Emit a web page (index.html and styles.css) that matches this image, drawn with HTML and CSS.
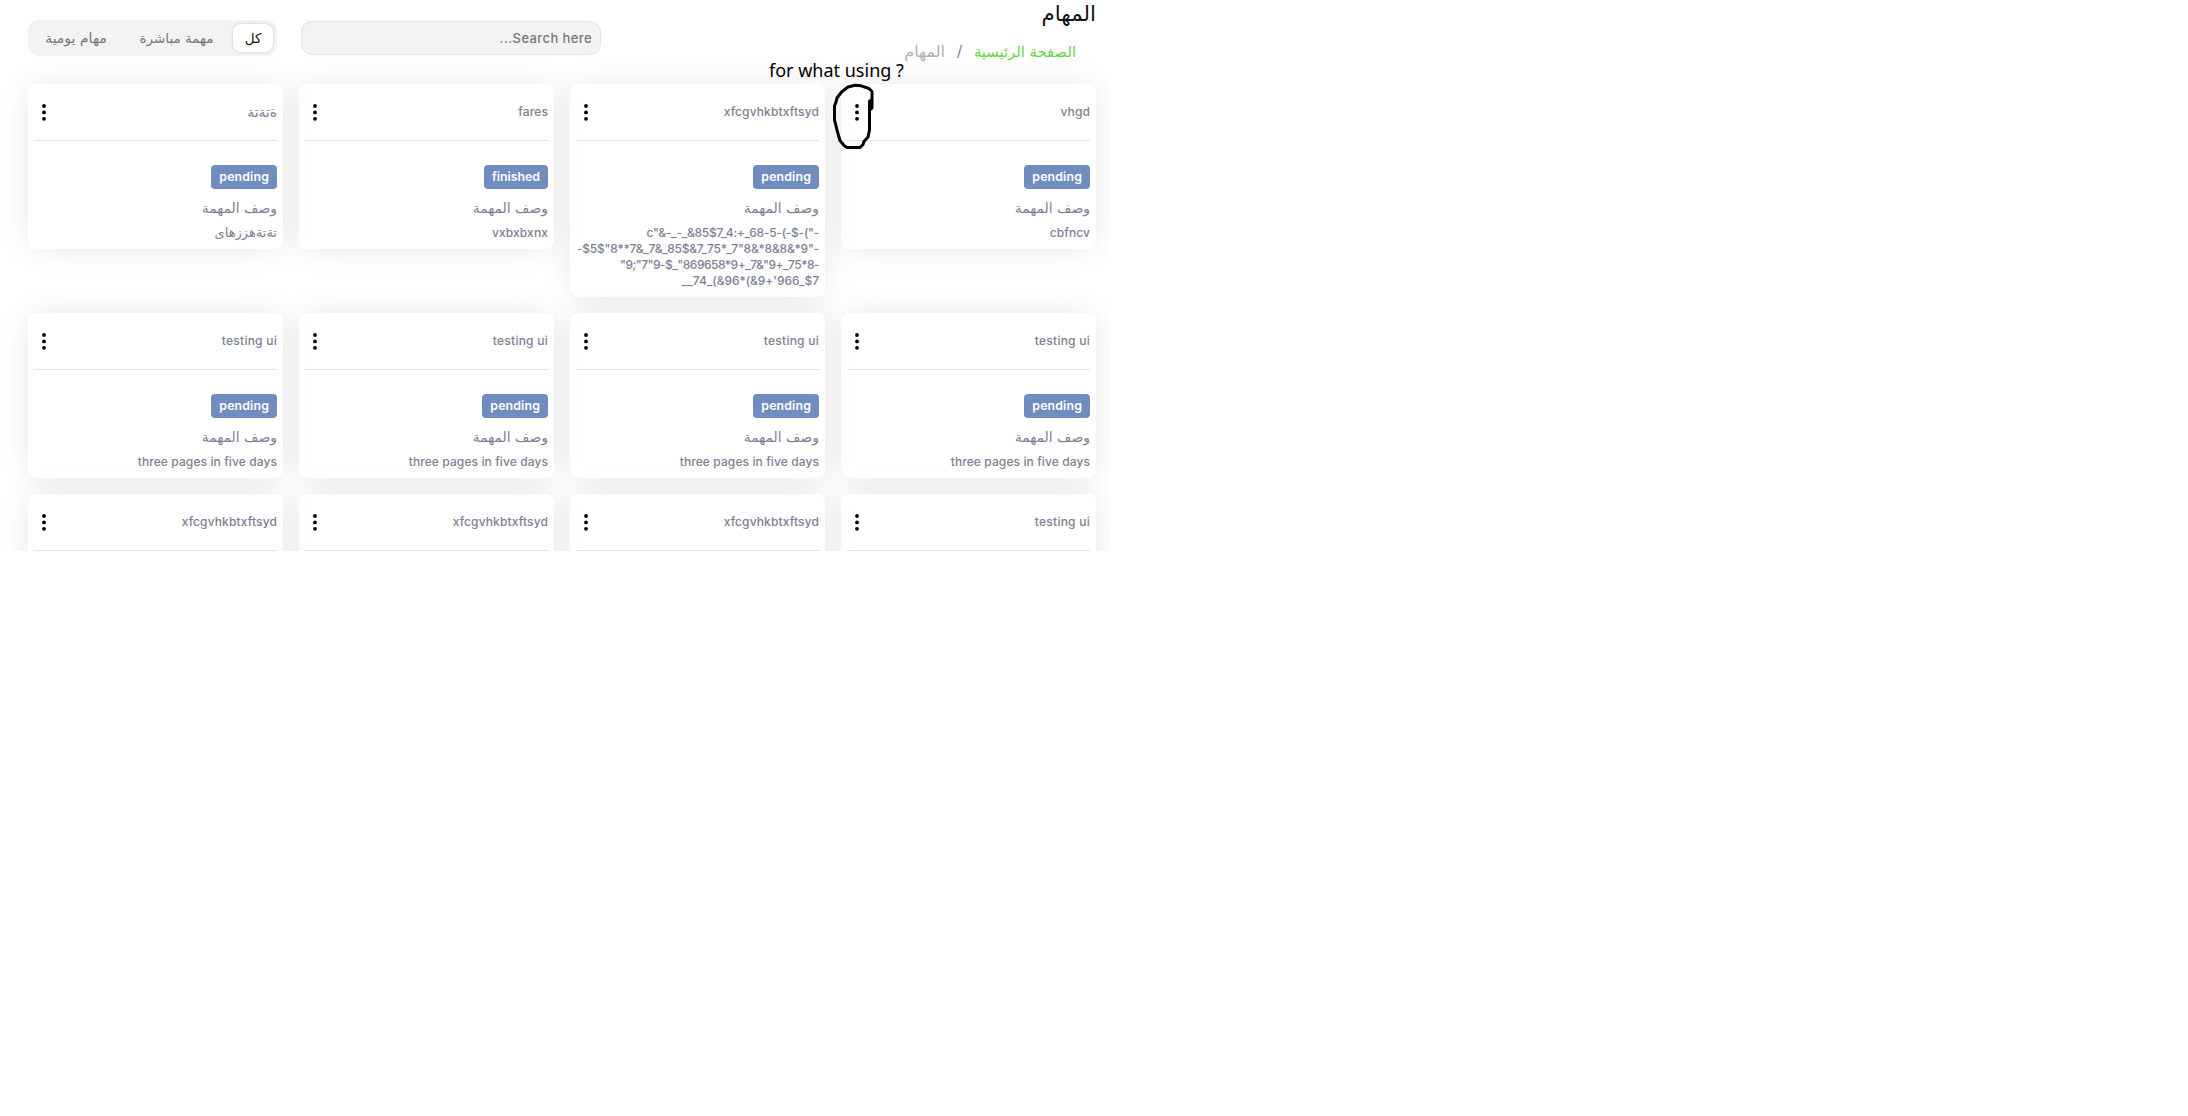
FILE: index.html
```html
<!DOCTYPE html>
<html lang="ar" dir="rtl">
<head>
<meta charset="utf-8">
<title>المهام</title>
<link rel="stylesheet" href="styles.css">
</head>
<body>
<svg width="0" height="0" class="defs"><symbol id="dots" viewBox="0 0 4 17"><circle cx="2" cy="2" r="1.9"/><circle cx="2" cy="8.4" r="1.9"/><circle cx="2" cy="14.8" r="1.9"/></symbol></svg>
<main class="app">
  <header class="top">
    <div class="heading">
      <h1>المهام</h1>
      <nav class="crumbs"><a class="home">الصفحة الرئيسية</a><span class="slash">/</span><span class="here">المهام</span></nav>
    </div>
    <input class="search" type="text" placeholder="Search here...">
    <div class="tabs">
      <button class="tab active">كل</button>
      <button class="tab direct">مهمة مباشرة</button>
      <button class="tab daily">مهام يومية</button>
    </div>
  </header>
  <section class="grid">
    <article class="card"><div class="head"><span class="name">vhgd</span><svg class="dots"><use href="#dots"/></svg></div><span class="pill">pending</span><h2>وصف المهمة</h2><p>cbfncv</p></article>
    <article class="card"><div class="head"><span class="name">xfcgvhkbtxftsyd</span><svg class="dots"><use href="#dots"/></svg></div><span class="pill">pending</span><h2>وصف المهمة</h2><p class="long"><span class="l1">c"&amp;-_-_&amp;85$7_4:+_68-5-(-$-("-</span><span class="l2">-$5$"8**7&amp;_7&amp;_85$&amp;7_75*_7"8&amp;*8&amp;8&amp;*9"-</span><span class="l3">"9;"7"9-$_"869658*9+_7&amp;"9+_75*8-</span><span class="l4">__74_(&amp;96*(&amp;9+'966_$7</span></p></article>
    <article class="card"><div class="head"><span class="name">fares</span><svg class="dots"><use href="#dots"/></svg></div><span class="pill narrow">finished</span><h2>وصف المهمة</h2><p>vxbxbxnx</p></article>
    <article class="card"><div class="head"><span class="name ar">ةتةتة</span><svg class="dots"><use href="#dots"/></svg></div><span class="pill">pending</span><h2>وصف المهمة</h2><p class="ar-text">تةتةهززهاى</p></article>
    <article class="card"><div class="head"><span class="name wide">testing ui</span><svg class="dots"><use href="#dots"/></svg></div><span class="pill">pending</span><h2>وصف المهمة</h2><p>three pages in five days</p></article>
    <article class="card"><div class="head"><span class="name wide">testing ui</span><svg class="dots"><use href="#dots"/></svg></div><span class="pill">pending</span><h2>وصف المهمة</h2><p>three pages in five days</p></article>
    <article class="card"><div class="head"><span class="name wide">testing ui</span><svg class="dots"><use href="#dots"/></svg></div><span class="pill">pending</span><h2>وصف المهمة</h2><p>three pages in five days</p></article>
    <article class="card"><div class="head"><span class="name wide">testing ui</span><svg class="dots"><use href="#dots"/></svg></div><span class="pill">pending</span><h2>وصف المهمة</h2><p>three pages in five days</p></article>
    <article class="card"><div class="head"><span class="name wide">testing ui</span><svg class="dots"><use href="#dots"/></svg></div></article>
    <article class="card"><div class="head"><span class="name">xfcgvhkbtxftsyd</span><svg class="dots"><use href="#dots"/></svg></div></article>
    <article class="card"><div class="head"><span class="name">xfcgvhkbtxftsyd</span><svg class="dots"><use href="#dots"/></svg></div></article>
    <article class="card"><div class="head"><span class="name">xfcgvhkbtxftsyd</span><svg class="dots"><use href="#dots"/></svg></div></article>
  </section>
  <div class="note" dir="ltr">for what using ?</div>
  <svg class="scribble" viewBox="830 80 48 72"><path d="M871 109V100M872 108V91.500L869 88.500 861 85.800 855 85.200 848 87 841.500 92 837 98 836 102 834.500 106V120L837.500 132 840 140.500 844 145.500 847 147.500H860L863 144.500 864 141.500 868 137 869.500 130V101"/></svg>
</main>
</body>
</html>
```
FILE: styles.css
```css
* { box-sizing: border-box; }
body { margin: 0; background: #fff; font-family: Inter, "DejaVu Sans", sans-serif; font-size: 12px; font-weight: 500; color: #7e8095; direction: ltr; }
.defs { position: absolute; }
.app { position: relative; width: 1110px; height: 551px; overflow: hidden; direction: rtl; padding: 0 14px 0 28px; }
.top { display: flex; height: 84px; align-items: flex-start; }
.heading { width: 495px; white-space: nowrap; }
h1 { margin: 0; height: 28px; font: 400 21.4px/27px "DejaVu Sans", sans-serif; color: #111; }
.crumbs { display: flex; align-items: center; height: 48px; padding-right: 20px; font: 400 14.8px/20px "DejaVu Sans", sans-serif; }
.home { color: #62d544; width: 102px; }
.slash { margin: 0 12px; width: 5px; font-size: 15px; }
.here { color: #b0b0b5; font-size: 16px; }
.search { width: 300px; height: 34px; margin: 21px 0 0 24px; border: 1px solid #e3e3e3; border-radius: 11px; background: #f3f3f3; padding: 0 8px; font: 500 13px Inter, sans-serif; letter-spacing: .4px; outline: 0; }
.search::placeholder { color: #76767c; opacity: 1; }
.tabs { width: 249px; height: 36px; margin-top: 20px; padding: 4px; display: flex; background: #f3f3f3; border-radius: 11px; }
.tab { border: 0; padding: 0 0 1px; height: 28px; background: none; font: 400 13.5px "DejaVu Sans", sans-serif; color: #76767c; }
.active { width: 40px; background: #fff; color: #111; border-radius: 8px; box-shadow: 0 0 3px rgba(0,0,0,.2); }
.direct { width: 113px; }
.daily { width: 88px; font-size: 14px; }
.grid { display: grid; grid-template-columns: repeat(4, 255px); gap: 16px; align-items: start; }
.card { height: 165px; padding: 0 6px; border-radius: 8px; background: #fff; box-shadow: 0 0 32px rgba(0,0,0,.09); }
.card:nth-child(2) { height: 213px; }
.head { height: 57px; border-bottom: 1px solid #e1e1e6; display: flex; justify-content: space-between; align-items: center; padding-left: 8px; }
.name { letter-spacing: .13px; padding-bottom: 1px; }
.wide { letter-spacing: .25px; }
.ar { font: 400 13.8px/20px "DejaVu Sans", sans-serif; letter-spacing: 0; }
.dots { width: 4px; height: 17px; fill: #000; }
.pill { display: table; height: 24px; margin-top: 24px; padding: 0 8px; border-radius: 4px; background: #718dbf; color: #fff; font-size: 12.3px; font-weight: 600; line-height: 24px; letter-spacing: .15px; }
.narrow { letter-spacing: 0; }
h2 { margin: 8px 0 0; font: 400 13.9px/22px "DejaVu Sans", sans-serif; }
p { margin: 6px 0 0; line-height: 16px; letter-spacing: .1px; }
.ar-text { letter-spacing: 0; font: 400 13px/16px "DejaVu Sans", sans-serif; }
.long { direction: ltr; text-align: right; }
.long span { display: block; white-space: nowrap; }
.l1 { letter-spacing: -.26px; }
.l2 { letter-spacing: -.21px; }
.l3 { letter-spacing: -.5px; }
.l4 { letter-spacing: -.05px; }
.note { position: absolute; left: 769px; top: 58px; font: 400 18px/25px "Noto Sans", sans-serif; color: #000; white-space: nowrap; }
.scribble { position: absolute; left: 830px; top: 80px; width: 48px; height: 72px; fill: none; stroke: #000; stroke-width: 3; stroke-linejoin: round; stroke-linecap: round; }
```
